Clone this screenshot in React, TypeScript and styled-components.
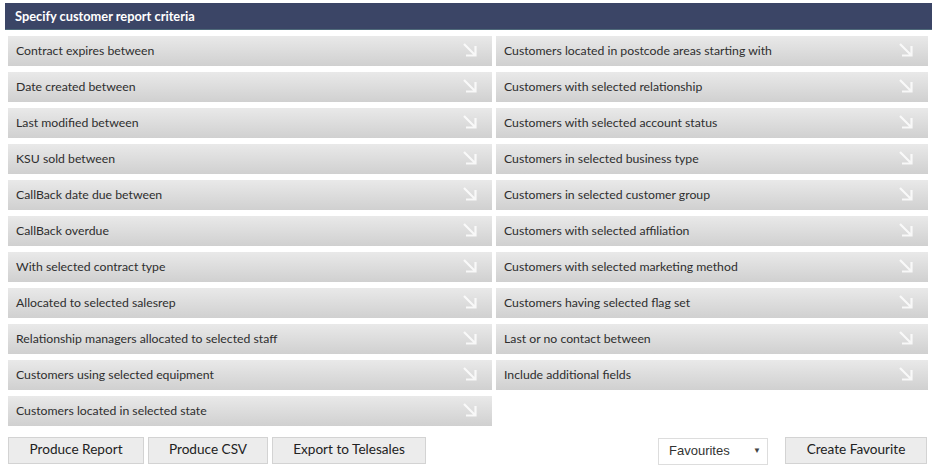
import React from "react";
import styled, { createGlobalStyle } from "styled-components";

const GlobalStyle = createGlobalStyle`
  body {
    margin: 0;
    background: #ffffff;
    font-family: Lato, "Open Sans", sans-serif;
  }
`;

const Page = styled.div`
  width: 927px;
  padding: 3px 0 0 5px;
`;

const Header = styled.div`
  height: 27px;
  background: #3b4566;
  border-bottom: 1px solid #4f6a7a;
  color: #ffffff;
  font-weight: 700;
  font-size: 12.8px;
  line-height: 26px;
  padding-left: 10px;
  box-sizing: border-box;
`;

const Grid = styled.div`
  display: grid;
  grid-template-columns: 484px 432px;
  column-gap: 4px;
  row-gap: 6px;
  padding: 6px 0 0 3px;
`;

const Row = styled.div`
  height: 30px;
  display: flex;
  align-items: center;
  justify-content: space-between;
  padding: 0 14px 2px 8px;
  background: linear-gradient(#e9e9e9, #d0d0d0);
  color: #2e2e2e;
  font-size: 12.25px;
  cursor: pointer;
  box-sizing: border-box;
`;

const Actions = styled.div`
  display: flex;
  align-items: center;
  padding: 10px 5px 0 3px;
`;

const Button = styled.button<{ $w: number }>`
  width: ${(p) => p.$w}px;
  height: 27px;
  padding: 0 0 3px;
  margin-right: 4px;
  background: #ececec;
  border: 1px solid #d3d3d3;
  box-sizing: border-box;
  color: #222222;
  font-family: Lato, sans-serif;
  font-size: 13.6px;
  cursor: pointer;

  &:last-child {
    margin-right: 0;
  }
`;

const Spacer = styled.div`
  flex: 1;
`;

const Select = styled.div`
  width: 110px;
  height: 27px;
  margin-top: 2px;
  margin-right: 17px;
  border: 1px solid #dddddd;
  background: #ffffff;
  box-sizing: border-box;
  display: flex;
  align-items: center;
  justify-content: space-between;
  padding: 0 6px 2px 10px;
  font-family: Arial, "Liberation Sans", sans-serif;
  font-size: 13px;
  color: #333333;
`;

const Caret = styled.span`
  font-size: 8px;
  color: #444444;
`;

const left = [
  "Contract expires between",
  "Date created between",
  "Last modified between",
  "KSU sold between",
  "CallBack date due between",
  "CallBack overdue",
  "With selected contract type",
  "Allocated to selected salesrep",
  "Relationship managers allocated to selected staff",
  "Customers using selected equipment",
  "Customers located in selected state",
];

const right = [
  "Customers located in postcode areas starting with",
  "Customers with selected relationship",
  "Customers with selected account status",
  "Customers in selected business type",
  "Customers in selected customer group",
  "Customers with selected affiliation",
  "Customers with selected marketing method",
  "Customers having selected flag set",
  "Last or no contact between",
  "Include additional fields",
];

function Arrow() {
  return (
    <svg width="16" height="16" viewBox="0 0 16 16" fill="none">
      <path
        d="M2 2 L13 13 M4 13.5 H13.5 V4"
        stroke="#ffffff"
        strokeOpacity="0.8"
        strokeWidth="2.2"
      />
    </svg>
  );
}

export default function App() {
  const cells: (string | null)[] = [];
  for (let i = 0; i < left.length; i++) {
    cells.push(left[i]);
    cells.push(right[i] ?? null);
  }
  return (
    <Page>
      <GlobalStyle />
      <Header>Specify customer report criteria</Header>
      <Grid>
        {cells.map((label, i) =>
          label ? (
            <Row key={i}>
              <span>{label}</span>
              <Arrow />
            </Row>
          ) : (
            <div key={i} />
          )
        )}
      </Grid>
      <Actions>
        <Button $w={136}>Produce Report</Button>
        <Button $w={120}>Produce CSV</Button>
        <Button $w={154}>Export to Telesales</Button>
        <Spacer />
        <Select>
          Favourites
          <Caret>▼</Caret>
        </Select>
        <Button $w={142}>Create Favourite</Button>
      </Actions>
    </Page>
  );
}
